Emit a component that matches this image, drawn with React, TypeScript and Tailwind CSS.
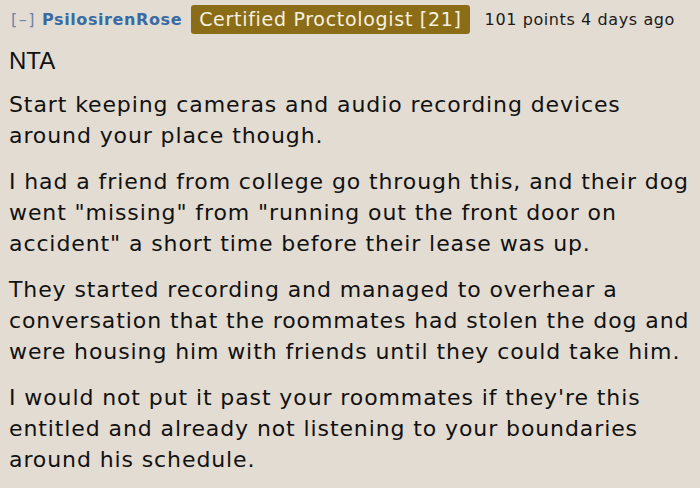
export default function App() {
  const paragraphs = [
    "Start keeping cameras and audio recording devices around your place though.",
    'I had a friend from college go through this, and their dog went "missing" from "running out the front door on accident" a short time before their lease was up.',
    "They started recording and managed to overhear a conversation that the roommates had stolen the dog and were housing him with friends until they could take him.",
    "I would not put it past your roommates if they're this entitled and already not listening to your boundaries around his schedule.",
  ]

  return (
    <div className="bg-[#e3dcd2] w-[700px] h-[488px] overflow-hidden font-['DejaVu_Sans',Verdana,sans-serif] text-[#111]">
      <div className="flex items-center pl-[11px] pt-[5px] h-[34px]">
        <span className="text-[16px] tracking-[1.5px] text-[#6f86a8] mr-[6px]">[–]</span>
        <span className="text-[16px] tracking-[0.6px] font-bold text-[#3a6aa3]">PsilosirenRose</span>
        <span className="ml-[9px] bg-[#8c6d17] text-[#f7f1e1] text-[19px] tracking-[0.7px] leading-[29px] h-[29px] px-[8px] rounded-[3px]">
          Certified Proctologist [21]
        </span>
        <span className="ml-[15px] text-[16px] tracking-[0.6px] text-[#1a1a1a]">101 points 4 days ago</span>
      </div>
      <div className="pl-[9px] pr-[8px] text-[22px] tracking-[0.9px] leading-[31px]">
        <p className="mt-[11px] mb-[-2px] font-['Liberation_Sans',Arial,sans-serif] text-[24px] tracking-normal">NTA</p>
        {paragraphs.map((p, i) => (
          <p key={i} className="mt-[15px]">
            {p}
          </p>
        ))}
      </div>
    </div>
  )
}
